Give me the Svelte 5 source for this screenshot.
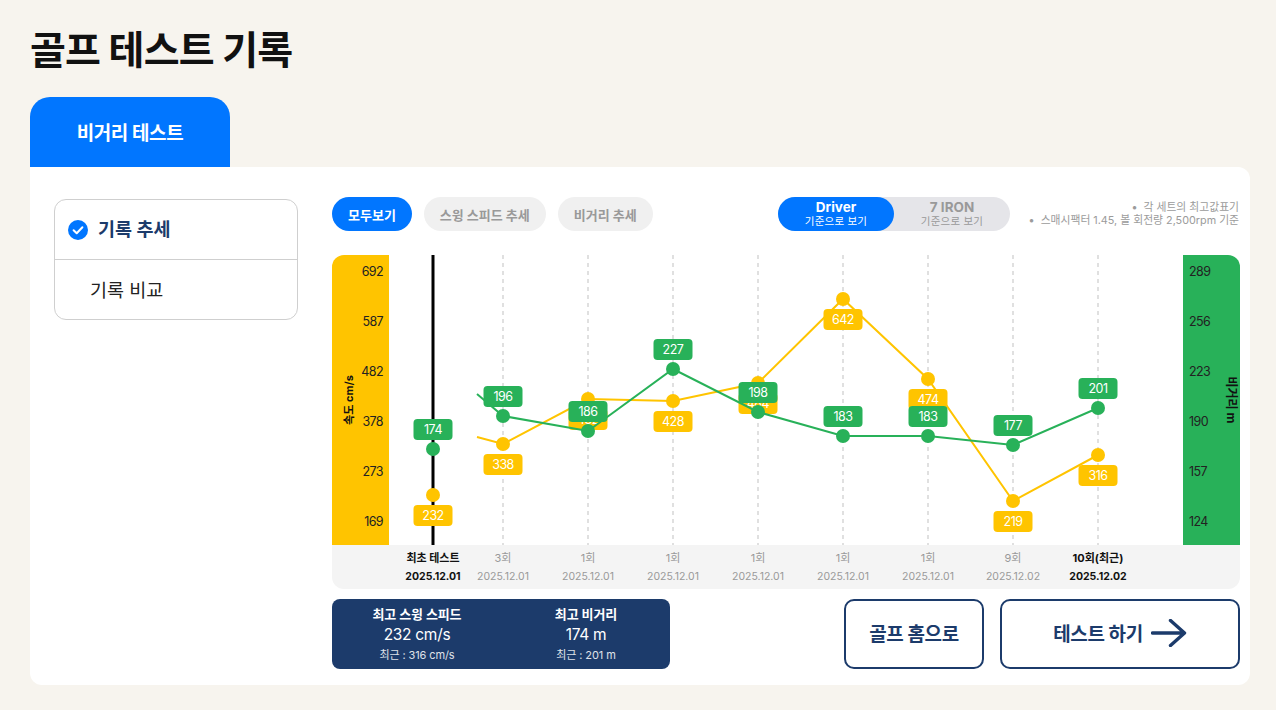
<script>
  const xs = [433, 503, 588, 673, 758, 843, 928, 1013, 1098];
  const yellow = [
    { y: 495, v: 232 }, { y: 444, v: 338 }, { y: 399, v: 432 }, { y: 401, v: 428 }, { y: 383, v: 484 },
    { y: 299, v: 642 }, { y: 379, v: 474 }, { y: 501, v: 219 }, { y: 455, v: 316 }
  ];
  const green = [
    { y: 449, v: 174 }, { y: 416, v: 196 }, { y: 431, v: 186 }, { y: 369, v: 227 }, { y: 412, v: 198 },
    { y: 436, v: 183 }, { y: 436, v: 183 }, { y: 445, v: 177 }, { y: 408, v: 201 }
  ];
  const line = (arr, start) =>
    start + ' ' + arr.slice(1).map((p, i) => `${xs[i + 1]},${p.y}`).join(' ');
  const ticksL = [692, 587, 482, 378, 273, 169];
  const ticksR = [289, 256, 223, 190, 157, 124];
  const cols = [
    { a: '최초 테스트', b: '2025.12.01', on: true },
    { a: '3회', b: '2025.12.01' },
    { a: '1회', b: '2025.12.01' },
    { a: '1회', b: '2025.12.01' },
    { a: '1회', b: '2025.12.01' },
    { a: '1회', b: '2025.12.01' },
    { a: '1회', b: '2025.12.01' },
    { a: '9회', b: '2025.12.02' },
    { a: '10회(최근)', b: '2025.12.02', on: true }
  ];
</script>

<div class="page">
  <h1>골프 테스트 기록</h1>
  <div class="tab">비거리 테스트</div>
  <div class="card">
    <aside class="side">
      <div class="item active">
        <svg class="check" width="20" height="20" viewBox="0 0 20 20">
          <circle cx="10" cy="10" r="10" fill="#0176ff" />
          <path d="M5.6 10.2l3.1 3 5.7-6" fill="none" stroke="#fff" stroke-width="2" stroke-linecap="round" stroke-linejoin="round" />
        </svg>
        <span class="lift">기록 추세</span>
      </div>
      <div class="item plain"><span class="lift1">기록 비교</span></div>
    </aside>

    <main class="main">
      <div class="top">
        <div class="pills">
          <span class="pill on">모두보기</span>
          <span class="pill">스윙 스피드 추세</span>
          <span class="pill">비거리 추세</span>
        </div>
        <div class="toggle">
          <div class="seg sel"><b>Driver</b><small>기준으로 보기</small></div>
          <div class="seg"><b>7 IRON</b><small>기준으로 보기</small></div>
        </div>
        <div class="notes">
          <div>•&nbsp; 각 세트의 최고값표기</div>
          <div>•&nbsp; 스매시팩터 1.45, 볼 회전량 2,500rpm 기준</div>
        </div>
      </div>

      <div class="chart">
        <div class="plotrow">
          <div class="axis left">
            <span class="axtitle tl">속도 cm/s</span>
            {#each ticksL as t}<span class="tick">{t}</span>{/each}
          </div>
          <svg class="plot" width="794" height="290" viewBox="389 255 794 290">
            {#each xs.slice(1) as x}
              <line x1={x} x2={x} y1="255" y2="545" stroke="#e0e0e0" stroke-width="2" stroke-dasharray="4 4" />
            {/each}
            <line x1="433" x2="433" y1="255" y2="545" stroke="#000" stroke-width="3" />

            <polyline points={line(yellow, '477,437')} fill="none" stroke="#ffc400" stroke-width="2" />
            {#each yellow as p, i}
              <circle cx={xs[i]} cy={p.y} r="7" fill="#ffc400" />
            {/each}
            {#each yellow as p, i}
              <rect x={xs[i] - 19.5} y={p.y + 10} width="39" height="21" rx="4" fill="#ffc400" />
              <text class="val" x={xs[i]} y={p.y + 25}>{p.v}</text>
            {/each}

            <polyline points={line(green, '477,394')} fill="none" stroke="#28b159" stroke-width="2" />
            {#each green as p, i}
              <rect x={xs[i] - 19.5} y={p.y - 30} width="39" height="21" rx="4" fill="#28b159" />
              <text class="val" x={xs[i]} y={p.y - 15}>{p.v}</text>
              <circle cx={xs[i]} cy={p.y} r="7" fill="#28b159" />
            {/each}
          </svg>
          <div class="axis right">
            <span class="axtitle tr">비거리 m</span>
            {#each ticksR as t}<span class="tick">{t}</span>{/each}
          </div>
        </div>
        <div class="band">
          {#each cols as c}
            <div class="col" class:on={c.on}>
              <span class="a">{c.a}</span>
              <span class="b">{c.b}</span>
            </div>
          {/each}
        </div>
      </div>

      <div class="bottom">
        <div class="stats">
          <div class="stat">
            <b>최고 스윙 스피드</b>
            <span class="big">232 cm/s</span>
            <small>최근 : 316 cm/s</small>
          </div>
          <div class="stat">
            <b>최고 비거리</b>
            <span class="big">174 m</span>
            <small>최근 : 201 m</small>
          </div>
        </div>
        <div class="actions">
          <button class="btn home"><span class="lift">골프 홈으로</span></button>
          <button class="btn go">
            <span class="lift">테스트 하기</span>
            <svg class="arrow" width="36" height="28" viewBox="0 0 36 28">
              <path d="M1.5 14H33M19.5 1.5L33.5 14L19.5 26.5" fill="none" stroke="#1c3b6b" stroke-width="3.4" stroke-linecap="round" stroke-linejoin="round" />
            </svg>
          </button>
        </div>
      </div>
    </main>
  </div>
</div>

<style>
  :global(body) {
    margin: 0;
    background: #f7f4ee;
    font-family: Inter, "Noto Sans CJK KR", sans-serif;
  }
  .page {
    height: 710px;
    box-sizing: border-box;
    padding: 0 26px 25px 30px;
    overflow: hidden;
    display: flex;
    flex-direction: column;
  }
  h1 {
    margin: 0;
    height: 97px;
    box-sizing: border-box;
    padding-top: 21px;
    font-size: 39px;
    line-height: 58px;
    font-weight: 700;
    letter-spacing: -0.8px;
    color: #111;
  }
  .tab {
    width: 200px;
    height: 70px;
    box-sizing: border-box;
    padding-bottom: 2px;
    background: #0176ff;
    color: #fff;
    border-radius: 20px 20px 0 0;
    display: flex;
    align-items: center;
    justify-content: center;
    font-size: 19px;
    font-weight: 700;
    letter-spacing: -0.4px;
  }
  .card {
    flex: 1;
    background: #fff;
    border-radius: 0 12px 12px 12px;
    display: flex;
    gap: 34px;
    padding: 30px 10px 16px 24px;
  }
  .side {
    width: 244px;
    height: 121px;
    box-sizing: border-box;
    margin-top: 2px;
    border: 1px solid #cfcfcf;
    border-radius: 12px;
    flex: none;
  }
  .item {
    height: 60px;
    display: flex;
    align-items: center;
    font-size: 18.5px;
    letter-spacing: 0;
  }
  .item.active {
    box-sizing: border-box;
    border-bottom: 1px solid #cfcfcf;
    padding-left: 13px;
    gap: 10px;
    color: #1c3b6b;
    font-weight: 700;
  }
  .lift { display: block; margin-bottom: 3px; }
  .lift1 { display: block; margin-bottom: 2px; }
  .check { flex: none; }
  .item.plain {
    padding-left: 35px;
    color: #222;
  }
  .main {
    width: 908px;
    display: flex;
    flex-direction: column;
  }
  .top {
    display: flex;
    align-items: flex-start;
    height: 34px;
    margin-bottom: 24px;
  }
  .pills {
    display: flex;
    gap: 12px;
    width: 446px;
  }
  .pill {
    height: 34px;
    padding: 0 16px;
    border-radius: 17px;
    background: #f0f0f0;
    color: #999;
    font-size: 13px;
    font-weight: 700;
    display: flex;
    align-items: center;
    white-space: nowrap;
  }
  .pill.on {
    background: #0176ff;
    color: #fff;
  }
  .toggle {
    width: 232px;
    height: 34px;
    border-radius: 17px;
    background: #e5e5e9;
    display: flex;
    flex: none;
  }
  .seg {
    flex: 1;
    display: flex;
    flex-direction: column;
    align-items: center;
    justify-content: center;
    color: #999;
    border-radius: 17px;
  }
  .seg.sel {
    flex: none;
    width: 116px;
    background: #0176ff;
    color: #fff;
  }
  .seg b {
    font-size: 13.5px;
    line-height: 15px;
    font-weight: 700;
  }
  .seg small {
    font-size: 10.5px;
    line-height: 13px;
    letter-spacing: 0.2px;
  }
  .notes {
    flex: 1;
    text-align: right;
    color: #9b9b9b;
    font-size: 10.8px;
    line-height: 13px;
    padding-top: 4px;
    padding-right: 1px;
    white-space: nowrap;
  }
  .chart {
    width: 908px;
    flex: none;
  }
  .plotrow {
    display: flex;
    height: 290px;
  }
  .axis {
    width: 57px;
    flex: none;
    position: relative;
    box-sizing: border-box;
    padding-top: 7px;
    display: flex;
    flex-direction: column;
    gap: 30px;
    font-size: 12.5px;
    letter-spacing: -0.6px;
    color: #222;
  }
  .axis.left {
    background: #ffc400;
    border-radius: 12px 0 0 0;
    align-items: flex-end;
    padding-right: 6px;
  }
  .axis.right {
    background: #28b159;
    border-radius: 0 12px 0 0;
    align-items: flex-start;
    padding-left: 6px;
  }
  .tick { line-height: 20px; height: 20px; }
  .axtitle {
    position: absolute;
    font-size: 11px;
    font-weight: 700;
    letter-spacing: 0;
    color: #111;
    white-space: nowrap;
    line-height: 14px;
  }
  .tl {
    left: 17px;
    top: 145px;
    transform: translate(-50%, -50%) rotate(-90deg);
  }
  .tr {
    left: 48px;
    top: 145px;
    font-size: 12px;
    transform: translate(-50%, -50%) rotate(90deg);
  }
  .plot { display: block; flex: none; }
  .val {
    font-size: 12.5px;
    letter-spacing: -0.5px;
    fill: #fff;
    text-anchor: middle;
    font-weight: 400;
  }
  .band {
    height: 44px;
    background: #f4f4f4;
    border-radius: 0 0 12px 12px;
    display: grid;
    grid-template-columns: 55px repeat(8, 85px);
    padding-left: 73.5px;
  }
  .col {
    display: flex;
    flex-direction: column;
    align-items: center;
    color: #999;
    font-size: 11px;
    white-space: nowrap;
    min-width: 0;
  }
  .col .a { line-height: 16px; margin-top: 5px; }
  .col .b { line-height: 16px; margin-top: 3px; font-size: 10.5px; }
  .col.on { color: #111; font-weight: 700; }
  .bottom {
    margin-top: 10px;
    display: flex;
    justify-content: space-between;
    height: 70px;
  }
  .stats {
    width: 338px;
    background: #1c3b6b;
    border-radius: 8px;
    display: grid;
    grid-template-columns: 170px 168px;
    color: #fff;
  }
  .stat {
    display: flex;
    flex-direction: column;
    align-items: center;
    justify-content: center;
  }
  .stat b { font-size: 13px; line-height: 18px; font-weight: 700; letter-spacing: -0.1px; }
  .stat .big { font-size: 15.5px; line-height: 24px; letter-spacing: -0.3px; }
  .stat small { font-size: 11px; line-height: 16px; letter-spacing: -0.1px; opacity: .85; }
  .actions { display: flex; gap: 16px; }
  .btn {
    height: 70px;
    box-sizing: border-box;
    background: #fff;
    border: 2px solid #1c3b6b;
    border-radius: 10px;
    color: #1c3b6b;
    font: 700 19px Inter, "Noto Sans CJK KR", sans-serif;
    letter-spacing: -0.4px;
    display: flex;
    align-items: center;
    justify-content: center;
    padding: 0;
  }
  .home { width: 140px; }
  .go { width: 240px; gap: 8px; }
  .arrow { margin-bottom: 2px; }
</style>
